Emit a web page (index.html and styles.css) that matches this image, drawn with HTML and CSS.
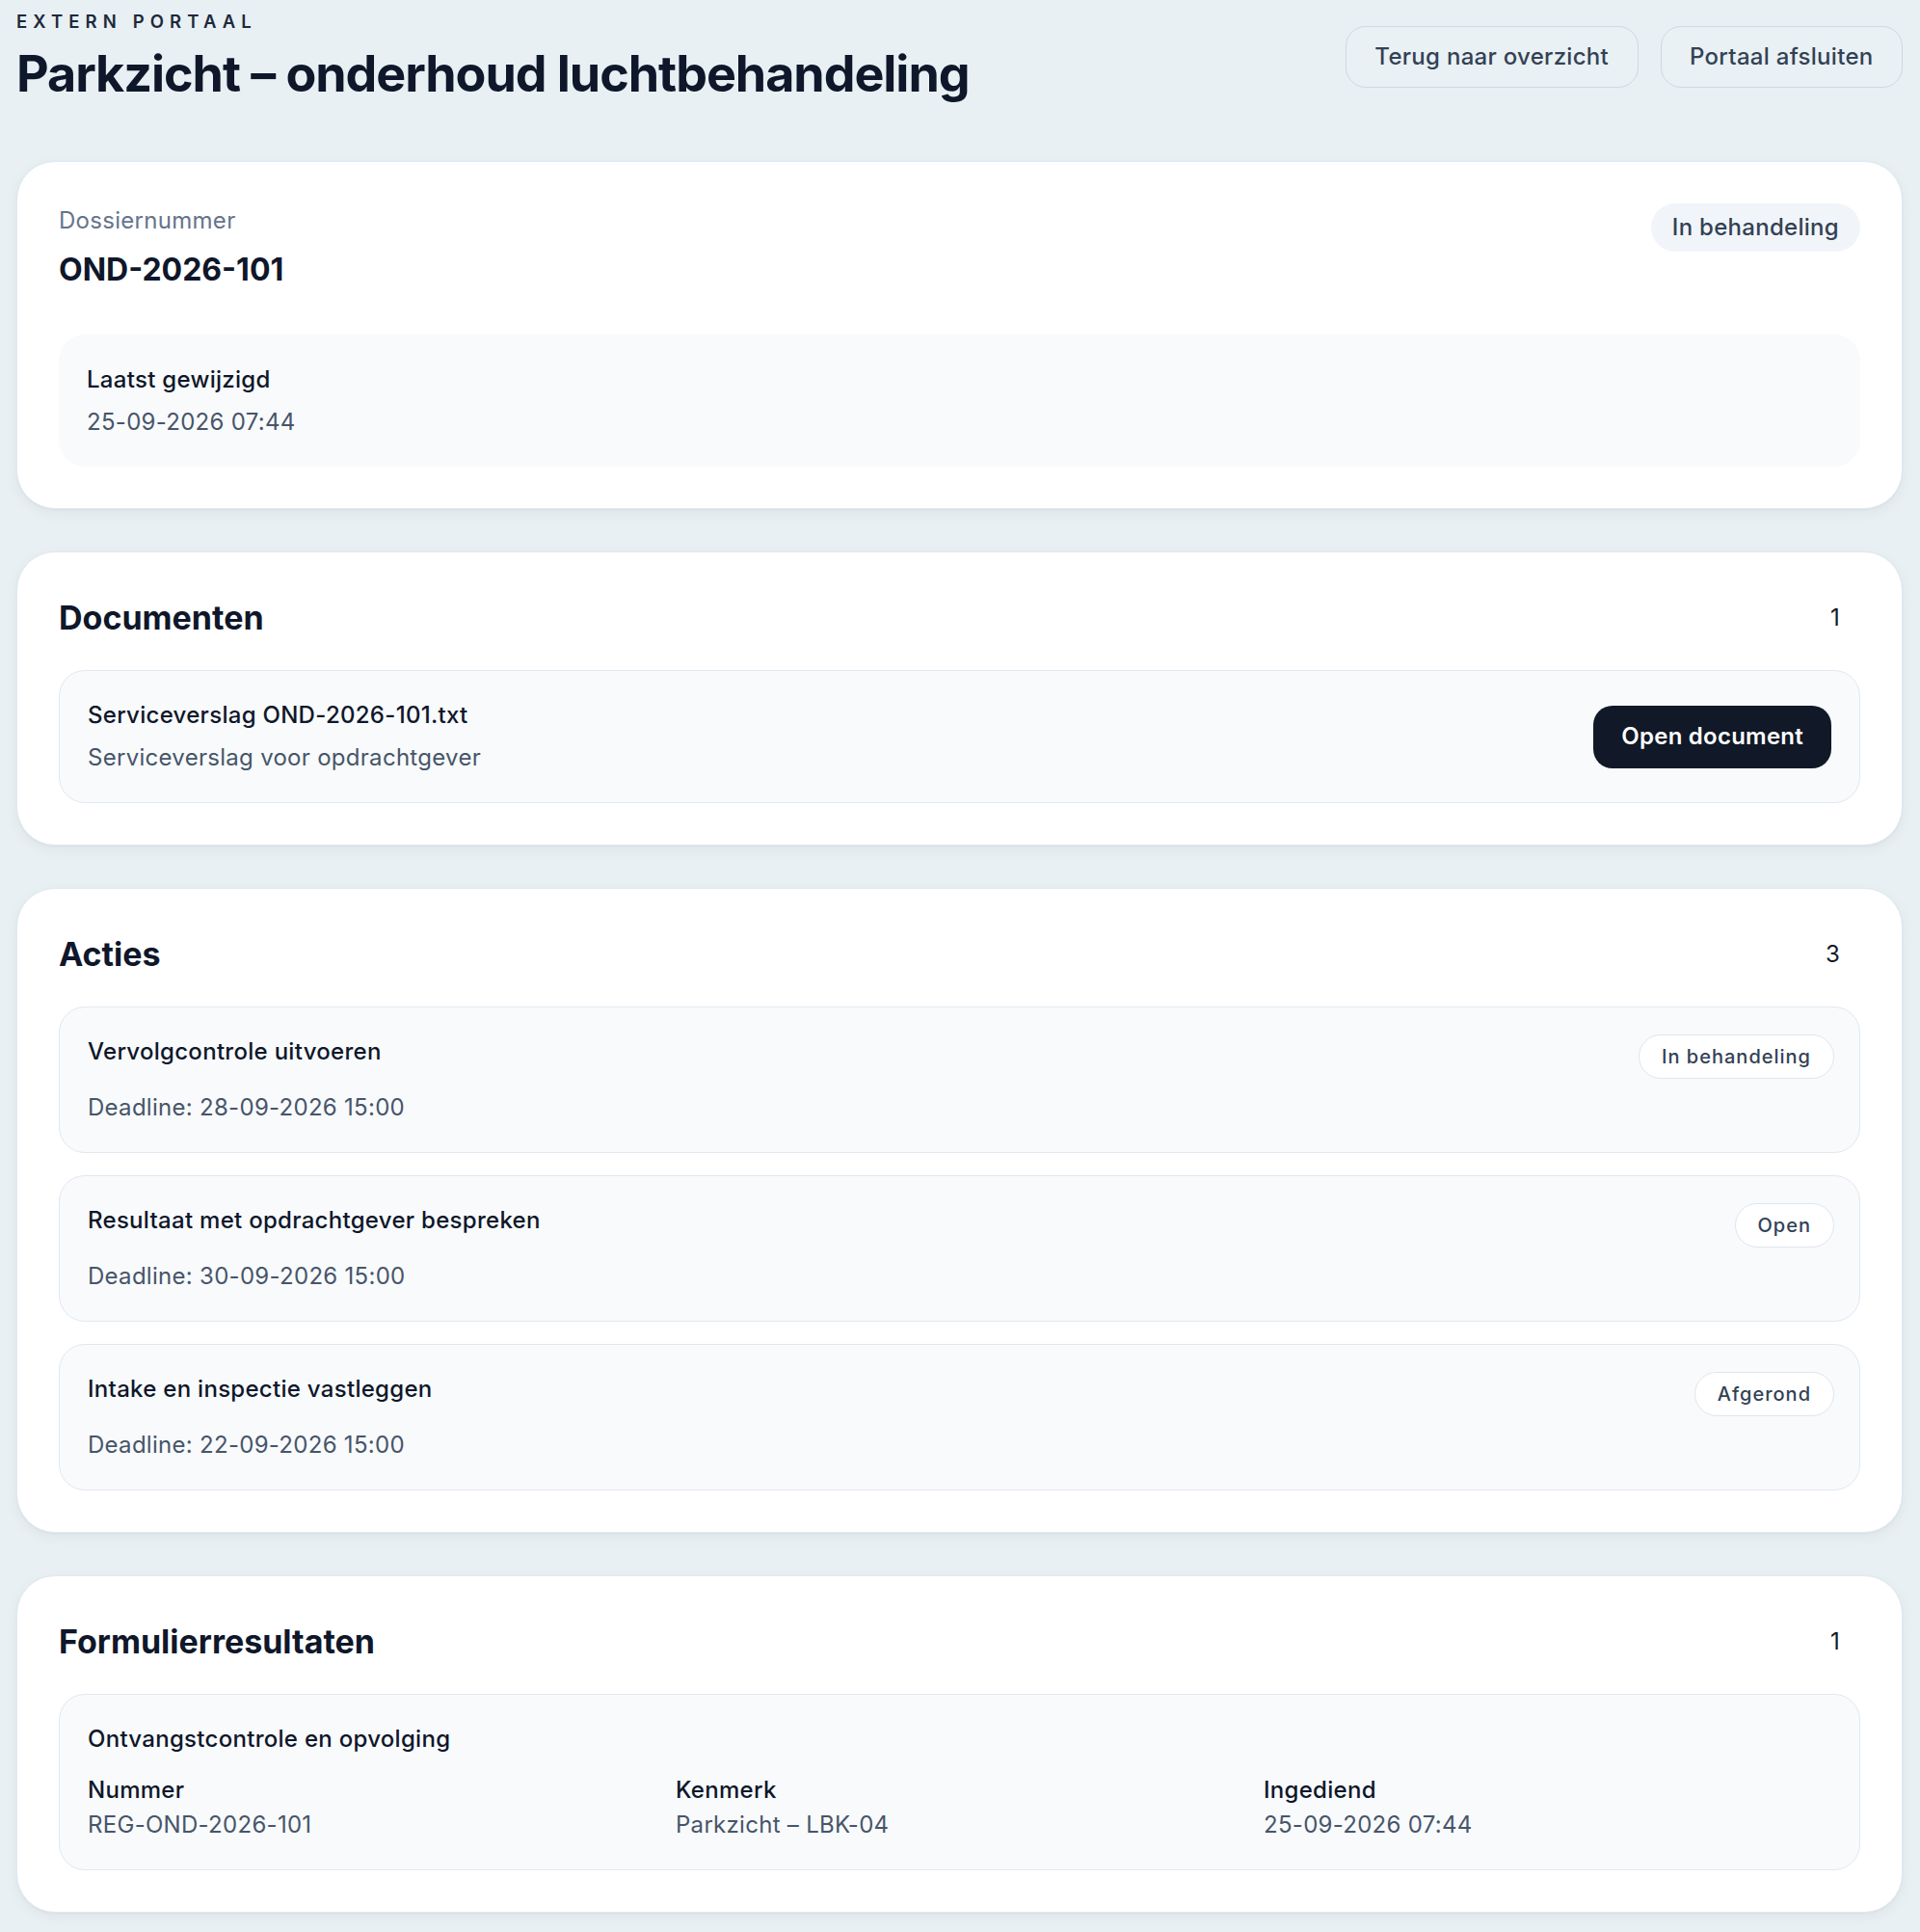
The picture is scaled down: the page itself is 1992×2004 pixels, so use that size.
FILE: index.html
```html
<!DOCTYPE html>
<html lang="nl">
<head>
<meta charset="utf-8">
<title>Parkzicht – onderhoud luchtbehandeling</title>
<link rel="stylesheet" href="styles.css">
</head>
<body>
<div class="page">
  <header class="top">
    <div class="top-title">
      <div class="eyebrow">EXTERN PORTAAL</div>
      <h1 class="title">Parkzicht – onderhoud luchtbehandeling</h1>
    </div>
    <div class="top-actions">
      <button class="btn-ghost">Terug naar overzicht</button>
      <button class="btn-ghost">Portaal afsluiten</button>
    </div>
  </header>

  <section class="card">
    <div class="dossier-head">
      <div>
        <div class="label-muted">Dossiernummer</div>
        <div class="dossier-no">OND-2026-101</div>
      </div>
      <span class="status">In behandeling</span>
    </div>
    <div class="meta-box">
      <div class="item-title">Laatst gewijzigd</div>
      <div class="item-sub">25-09-2026 07:44</div>
    </div>
  </section>

  <section class="card">
    <div class="card-head">
      <h2 class="card-title">Documenten</h2>
      <span class="count">1</span>
    </div>
    <div class="list">
      <div class="item doc-item">
        <div>
          <div class="item-title">Serviceverslag OND-2026-101.txt</div>
          <div class="item-sub">Serviceverslag voor opdrachtgever</div>
        </div>
        <button class="btn-dark">Open document</button>
      </div>
    </div>
  </section>

  <section class="card">
    <div class="card-head">
      <h2 class="card-title">Acties</h2>
      <span class="count">3</span>
    </div>
    <div class="list">
      <div class="item action-item">
        <div class="action-row">
          <div class="item-title">Vervolgcontrole uitvoeren</div>
          <span class="pill">In behandeling</span>
        </div>
        <div class="item-sub deadline">Deadline: 28-09-2026 15:00</div>
      </div>
      <div class="item action-item">
        <div class="action-row">
          <div class="item-title">Resultaat met opdrachtgever bespreken</div>
          <span class="pill">Open</span>
        </div>
        <div class="item-sub deadline">Deadline: 30-09-2026 15:00</div>
      </div>
      <div class="item action-item">
        <div class="action-row">
          <div class="item-title">Intake en inspectie vastleggen</div>
          <span class="pill">Afgerond</span>
        </div>
        <div class="item-sub deadline">Deadline: 22-09-2026 15:00</div>
      </div>
    </div>
  </section>

  <section class="card">
    <div class="card-head">
      <h2 class="card-title">Formulierresultaten</h2>
      <span class="count">1</span>
    </div>
    <div class="list">
      <div class="item form-item">
        <div class="item-title">Ontvangstcontrole en opvolging</div>
        <div class="fields">
          <div>
            <div class="item-title">Nummer</div>
            <div class="field-value">REG-OND-2026-101</div>
          </div>
          <div>
            <div class="item-title">Kenmerk</div>
            <div class="field-value">Parkzicht – LBK-04</div>
          </div>
          <div>
            <div class="item-title">Ingediend</div>
            <div class="field-value">25-09-2026 07:44</div>
          </div>
        </div>
      </div>
    </div>
  </section>
</div>
</body>
</html>
```

FILE: styles.css
```css
* { box-sizing: border-box; }

html, body {
  margin: 0;
  padding: 0;
}

body {
  background: #e8f0f3;
  font-family: Inter, "Noto Sans", "Liberation Sans", sans-serif;
  color: #0f172a;
  font-size: 24px;
  line-height: 32px;
  letter-spacing: 0.012em;
}

.page {
  padding: 10px 18px 22px 17px;
  display: flex;
  flex-direction: column;
  gap: 44px;
}

.top {
  display: flex;
  justify-content: space-between;
  align-items: center;
  margin-bottom: 16px;
}

.eyebrow {
  font-size: 18.5px;
  line-height: 24px;
  font-weight: 600;
  letter-spacing: 0.33em;
  color: #1e293b;
}

.title {
  margin: 13px 0 0;
  font-size: 52px;
  line-height: 60px;
  font-weight: 700;
  letter-spacing: -0.02em;
  color: #0f172a;
}

.top-actions {
  display: flex;
  gap: 23px;
}

.btn-ghost {
  font-family: inherit;
  font-size: 24px;
  line-height: 30px;
  font-weight: 500;
  letter-spacing: 0.012em;
  color: #334155;
  background: rgba(255, 255, 255, 0.08);
  border: 1px solid #cfd8e4;
  border-radius: 21px;
  padding: 16px 29.5px;
}

.card {
  background: #ffffff;
  border: 1px solid #e2e8f0;
  border-radius: 40px;
  padding: 43px;
  box-shadow: 0 4px 14px rgba(15, 23, 42, 0.05), 0 1px 2px rgba(15, 23, 42, 0.04);
}

.dossier-head {
  display: flex;
  justify-content: space-between;
  align-items: flex-start;
}

.label-muted {
  color: #64748b;
  font-size: 24px;
  line-height: 36px;
}

.dossier-no {
  margin-top: 14px;
  font-size: 32px;
  line-height: 38px;
  font-weight: 700;
  letter-spacing: 0;
  color: #0f172a;
}

.status {
  background: #f1f5f9;
  color: #334155;
  font-weight: 500;
  font-size: 24px;
  line-height: 30px;
  padding: 10px 22px;
  border-radius: 999px;
}

.meta-box {
  margin-top: 48px;
  background: #f8fafc;
  border-radius: 27px;
  padding: 31px 29px 30px;
}

.item-title {
  font-weight: 500;
  color: #0f172a;
  font-size: 24px;
  line-height: 32px;
}

.item-sub {
  margin-top: 12px;
  color: #475569;
  font-size: 24px;
  line-height: 32px;
}

.card-head {
  display: flex;
  justify-content: space-between;
  align-items: center;
  min-height: 48px;
}

.card-title {
  margin: 0;
  font-size: 34px;
  line-height: 48px;
  font-weight: 700;
  letter-spacing: 0;
  color: #0f172a;
}

.count {
  font-size: 24px;
  line-height: 30px;
  padding: 10px 21px;
  color: #111827;
}

.list {
  margin-top: 29px;
  display: flex;
  flex-direction: column;
  gap: 23px;
}

.item {
  background: #f8fafc;
  border: 1px solid #e2e8f0;
  border-radius: 27px;
}

.doc-item {
  display: flex;
  justify-content: space-between;
  align-items: center;
  padding: 30px 29px;
}

.btn-dark {
  font-family: inherit;
  font-size: 24px;
  line-height: 30px;
  font-weight: 600;
  letter-spacing: 0.01em;
  color: #ffffff;
  background: #111827;
  border: none;
  border-radius: 20px;
  padding: 17px 29px 18px;
}

.action-item {
  padding: 28px 26px 30px 29px;
}

.action-row {
  display: flex;
  justify-content: space-between;
  align-items: flex-start;
}

.action-row .item-title {
  margin-top: 2px;
}

.pill {
  background: #ffffff;
  border: 1px solid #dfe6ef;
  border-radius: 999px;
  color: #334155;
  font-size: 20px;
  font-weight: 500;
  letter-spacing: 0.05em;
  line-height: 30px;
  padding: 7px 23px;
}

.deadline {
  margin-top: 14px;
}

.form-item {
  padding: 30px 29px;
}

.fields {
  margin-top: 21px;
  display: grid;
  grid-template-columns: repeat(3, 1fr);
  gap: 21px;
}

.field-value {
  margin-top: 4px;
  color: #475569;
  font-size: 24px;
  line-height: 32px;
}
```
